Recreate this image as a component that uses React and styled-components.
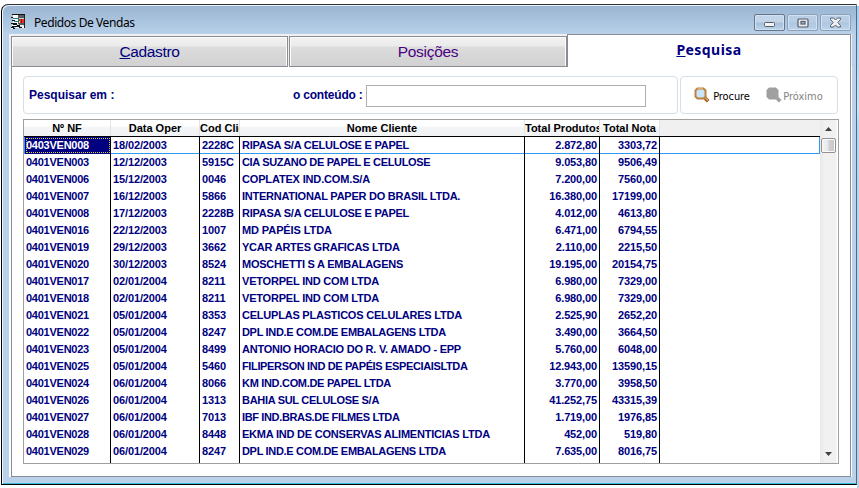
import React from 'react';
import styled, { createGlobalStyle } from 'styled-components';

const Global = createGlobalStyle`
  * { box-sizing: border-box; }
  body { margin: 0; background: #fff; overflow: hidden; }
`;

const Desktop = styled.div`
  width: 859px;
  height: 488px;
  padding: 4px 0 0 1px;
  display: flex;
  background: #fff;
  font-family: 'Liberation Sans', Arial, sans-serif;
  color: #000080;
`;

const Window = styled.main`
  width: 856px;
  height: 481px;
  display: flex;
  flex-direction: column;
  border: 1px solid #000;
  border-top-color: #303234;
  border-right-color: #58677c;
  border-radius: 7px 0 0 0;
  background: linear-gradient(#99b4d1 0, #b9d1ea 29px, #b9d1ea 100%);
  box-shadow: inset 1px 1px 0 #edf5fc, inset 0 -1px 0 #38bcd8;
`;

const NextWindow = styled.div`
  width: 2px;
  height: 488px;
  margin-top: -4px;
  background: linear-gradient(#fff 0 6px, #9fd0f3 6px, #c5e5fc 110px, #b4d8f6 124px, #b9d1ea);
`;

const TitleBar = styled.header`
  height: 29px;
  flex: none;
  display: flex;
  align-items: flex-start;
  padding: 9px 5px 0 9px;
`;

const Title = styled.h1`
  margin: 0 auto 0 7px;
  font: 12px/18px 'Noto Sans', 'Open Sans', sans-serif;
  letter-spacing: -0.42px;
  color: #000;
`;

const WindowButton = styled.button`
  width: 31px;
  height: 17px;
  margin-left: 2px;
  padding: 0;
  display: flex;
  align-items: center;
  justify-content: center;
  border: 1px solid ${p => (p.$strong ? '#65758c' : '#8ba0b9')};
  border-radius: 2px;
  box-shadow: inset 0 0 0 1px #d2e2f3;
  background: ${p => (p.$strong
    ? 'linear-gradient(#c3d5e9 0 48%, #a7bfd9 52%, #bcd3eb)'
    : 'linear-gradient(#b9cee5 0 48%, #aec6e0 52%, #bcd3eb)')};
`;

const Body = styled.div`
  width: 843px;
  height: 443px;
  margin-left: 7px;
  flex: none;
  display: flex;
  flex-direction: column;
  padding: 0 1px 0 2px;
  background: linear-gradient(#f0f0f0 32px, #fff 32px);
`;

const Tabs = styled.nav`
  height: 33px;
  flex: none;
  display: flex;
  align-items: flex-end;
`;

const Tab = styled.div`
  width: ${p => p.$w}px;
  height: ${p => (p.$active ? 33 : 31)}px;
  margin-right: ${p => p.$gap || 0}px;
  padding-top: ${p => (p.$active ? 3 : 3)}px;
  display: flex;
  justify-content: center;
  font-size: 15.5px;
  letter-spacing: ${p => p.$ls || 0}px;
  line-height: 24px;
  border: 1px solid #898c95;
  color: ${p => p.$color || '#000080'};
  background: linear-gradient(#f2f2f2, #ebebeb 9px, #dcdcdc 10px, #d2d2d2 28px);
  box-shadow: inset 1px 1px 0 #fcfcfc, inset -1px 0 0 #fcfcfc;
  ${p => p.$active && `
    background: #fff;
    box-shadow: none;
    border-bottom: 0;
    font: bold 14px/24px 'Noto Sans', 'Open Sans', sans-serif;
    letter-spacing: .45px;
  `}
`;

const Panel = styled.section`
  width: 840px;
  height: 410px;
  flex: none;
  display: flex;
  flex-direction: column;
  padding: 9px 12px 13px 11px;
  border: solid #898c95;
  border-width: 0 1px 1px;
  background: #fff;
`;

const SearchRow = styled.div`
  height: 38px;
  display: flex;
  gap: 2px;
  margin-bottom: 5px;
`;

const Group = styled.div`
  width: ${p => p.$w}px;
  height: 38px;
  display: flex;
  align-items: center;
  padding-left: ${p => p.$pad}px;
  border: 1px solid #d5dfe5;
  border-radius: 4px;
`;

const Label = styled.label`
  width: ${p => p.$w}px;
  font-size: 12px;
  font-weight: bold;
  line-height: 16px;
  letter-spacing: ${p => p.$ls || 0}px;
  white-space: nowrap;
`;

const SearchInput = styled.input`
  width: 280px;
  height: 22px;
  margin-top: 2px;
  border: 1px solid #abadb3;
  background: #fff;
`;

const Action = styled.button`
  width: ${p => p.$w}px;
  height: 24px;
  display: flex;
  align-items: center;
  gap: ${p => p.$gap}px;
  padding: 0;
  border: 0;
  background: none;
  font: 11px/16px 'DejaVu Sans Condensed', 'DejaVu Sans', sans-serif;
  font-stretch: condensed;
  letter-spacing: ${p => p.$ls}px;
  color: ${p => (p.$muted ? '#838383' : '#000')};
`;

const ActionText = styled.span`
  padding-top: 3px;
`;

const GridFrame = styled.div`
  width: 816px;
  height: 345px;
  flex: none;
  display: flex;
  border: 1px solid #a0a0a0;
`;

const Sheet = styled.div`
  width: 796px;
  height: 343px;
  display: flex;
  flex-direction: column;
`;

const columns = '87px 89px 40px 285px 75px 60px 160px';

const HeadRow = styled.div`
  display: grid;
  grid-template-columns: ${columns};
  width: 796px;
  height: 17px;
  flex: none;
  border-bottom: 1px solid #000;
  background: #f0f0f0;
`;

const HeadCell = styled.div`
  overflow: hidden;
  padding-top: 1px;
  text-align: ${p => (p.$clipped ? 'left' : 'center')};
  white-space: nowrap;
  font-size: 11px;
  font-weight: bold;
  line-height: 15px;
  letter-spacing: ${p => p.$ls || 0}px;
  color: #000;
  border-right: 1px solid #e0e3e7;
  background: linear-gradient(#fff 0 6px, #f4f5f7 7px, #f1f2f4);
`;

const Rows = styled.div`
  height: 326px;
  display: grid;
  grid-template-rows: repeat(19, 17px) 3px;
`;

const Row = styled.div`
  display: grid;
  grid-template-columns: ${columns};
  box-shadow: ${p => (p.$current ? 'inset -1px -1px 0 #3399f5, inset 1px 0 0 #3399f5' : 'none')};
`;

const Cell = styled.div`
  padding: 0 2px;
  ${p => p.$selected && `
    margin: 0 0 1px 1px;
    padding-left: 1px;
    background-color: #000080;
    background-clip: padding-box;
    color: #fff;
    outline: 1px dotted #d8c850;
    outline-offset: -2px;
  `}
  text-align: ${p => (p.$right ? 'right' : 'left')};
  font-size: 11px;
  font-weight: bold;
  line-height: 17px;
  letter-spacing: ${p => p.$ls || 0}px;
  white-space: nowrap;
  border-right: 1px solid #000;
`;

const ScrollBar = styled.div`
  width: 18px;
  height: 343px;
  display: flex;
  flex-direction: column;
  align-items: center;
  padding: 1px 2px 1px 0;
  background: linear-gradient(90deg, #e9e9e9, #f1f1f1 5px, #f0f0f0 16px, #fff 17px);
`;

const Arrow = styled.div`
  height: 16px;
  display: flex;
  align-items: center;
`;

const Thumb = styled.div`
  width: 15px;
  height: 15px;
  margin-top: 1px;
  margin-bottom: auto;
  border: 1px solid #929292;
  border-radius: 2px;
  box-shadow: inset 0 0 0 1px #fafafa;
  background: linear-gradient(90deg, #f4f4f4, #e7e7e9 48%, #d0d0d3 52%, #c8c8ca);
`;

const AppIcon = () => (
  <svg width="16" height="16" viewBox="0 0 16 16" shapeRendering="crispEdges">
    <path fill="#c9d3dc" d="M2 1h12v14H9v-2H2z" />
    <path fill="#f8f8f8" d="M2 1h5v9H2zM1 11h4v2H1zM5 13h4v1H5zM0 14h2v1H0zM11 13h2v1h-2z" />
    <path fill="#24788e" d="M2 4h5v1H2zM3 7h4v1H3z" />
    <path fill="#111" d="M1 0h13v1H1zM0 3h2v1H0zM1 6h3v1H1zM0 9h6v1H0zM2 10h4v1H2zM1 12h5v1H1zM0 13h3v1H0zM6 11h3v2H6zM8 13h3v1H8zM2 14h2v1H2z" />
    <path fill="#555d59" d="M7 1h6v3H7zM7 4h1v6H7zM8 9h5v2H8z" />
    <path fill="#222" d="M13 1h1v13h-1z" />
    <path fill="#ee2a22" d="M9 5h1v4H9zM11 5h2v4h-2z" />
    <path fill="#8b1b19" d="M10 5h1v4h-1z" />
    <path fill="#347c42" d="M8 5h1v2H8z" />
    <path fill="#fff" d="M9 11h3v1H9zM11 12h2v2h-2z" />
  </svg>
);

const Minimize = () => (
  <svg width="13" height="9" viewBox="0 0 13 9"><rect x="1.5" y="4.5" width="10" height="4" rx="1" fill="#f3f5f7" stroke="#555c6a" /></svg>
);
const Restore = () => (
  <svg width="12" height="10" viewBox="0 0 12 10"><rect x="1" y="1" width="10" height="8" rx="1" fill="#e7ebef" stroke="#555c6a" strokeWidth="1.2" /><rect x="4" y="3.500" width="4" height="2.500" fill="#a9bed5" stroke="#555c6a" strokeWidth="1.200" /></svg>
);
const Close = () => (
  <svg width="13" height="11" viewBox="0 0 13 11"><path d="M1.500 1h3l2 2 2-2h3v1.500L8.800 5.500l2.700 3V10h-3l-2-2-2 2h-3V8.500l2.700-3-2.700-3z" fill="#edf0f3" stroke="#596271" /></svg>
);

const Magnifier = ({ muted }) => (
  <svg width="16" height="17" viewBox="0 0 16 17">
    <path d="m10.500 10.500 3.700 3.700" stroke={muted ? '#a0a0a0' : '#9a5820'} strokeWidth="3.600" />
    {!muted && <path d="m11 10.500 3 3" stroke="#e6aa62" strokeWidth="1.400" />}
    <path d="M3.500 1.500h6l2 2v6l-2 2h-6l-2-2v-6z" fill={muted ? '#a0a0a0' : '#c9e4fb'} stroke={muted ? '#a0a0a0' : '#bd8240'} strokeWidth="2" />
    {!muted && <path d="M3 2.500 4 1.500h5" fill="none" stroke="#dcac68" />}
  </svg>
);

const Chevron = ({ down }) => (
  <svg width="9" height="6" viewBox="0 0 9 6"><path d={down ? 'M1 1h7L4.500 5z' : 'M1 5h7L4.500 1z'} fill="#404040" /></svg>
);

const orders = [
  ['0403VEN008', '18/02/2003', '2228C', 'RIPASA S/A CELULOSE E PAPEL', '2.872,80', '3303,72'],
  ['0401VEN003', '12/12/2003', '5915C', 'CIA SUZANO DE PAPEL E CELULOSE', '9.053,80', '9506,49'],
  ['0401VEN006', '15/12/2003', '0046', 'COPLATEX IND.COM.S/A', '7.200,00', '7560,00'],
  ['0401VEN007', '16/12/2003', '5866', 'INTERNATIONAL PAPER DO BRASIL LTDA.', '16.380,00', '17199,00'],
  ['0401VEN008', '17/12/2003', '2228B', 'RIPASA S/A CELULOSE E PAPEL', '4.012,00', '4613,80'],
  ['0401VEN016', '22/12/2003', '1007', 'MD PAPÉIS LTDA', '6.471,00', '6794,55'],
  ['0401VEN019', '29/12/2003', '3662', 'YCAR ARTES GRAFICAS LTDA', '2.110,00', '2215,50'],
  ['0401VEN020', '30/12/2003', '8524', 'MOSCHETTI S A EMBALAGENS', '19.195,00', '20154,75'],
  ['0401VEN017', '02/01/2004', '8211', 'VETORPEL IND COM LTDA', '6.980,00', '7329,00'],
  ['0401VEN018', '02/01/2004', '8211', 'VETORPEL IND COM LTDA', '6.980,00', '7329,00'],
  ['0401VEN021', '05/01/2004', '8353', 'CELUPLAS PLASTICOS CELULARES LTDA', '2.525,90', '2652,20'],
  ['0401VEN022', '05/01/2004', '8247', 'DPL IND.E COM.DE EMBALAGENS LTDA', '3.490,00', '3664,50'],
  ['0401VEN023', '05/01/2004', '8499', 'ANTONIO HORACIO DO R. V. AMADO - EPP', '5.760,00', '6048,00'],
  ['0401VEN025', '05/01/2004', '5460', 'FILIPERSON IND DE PAPÉIS ESPECIAISLTDA', '12.943,00', '13590,15'],
  ['0401VEN024', '06/01/2004', '8066', 'KM IND.COM.DE PAPEL LTDA', '3.770,00', '3958,50'],
  ['0401VEN026', '06/01/2004', '1313', 'BAHIA SUL CELULOSE S/A', '41.252,75', '43315,39'],
  ['0401VEN027', '06/01/2004', '7013', 'IBF IND.BRAS.DE FILMES LTDA', '1.719,00', '1976,85'],
  ['0401VEN028', '06/01/2004', '8448', 'EKMA IND DE CONSERVAS ALIMENTICIAS LTDA', '452,00', '519,80'],
  ['0401VEN029', '06/01/2004', '8247', 'DPL IND.E COM.DE EMBALAGENS LTDA', '7.635,00', '8016,75'],
];

const spacing = [-0.25, -0.12, -0.12, -0.1, -0.13, -0.1];

// Tracking of the client names, one value per order.
const nameSpacing = [
  -0.24, -0.34, -0.16, -0.25, -0.24, -0.1, -0.23, -0.23, -0.2, -0.2,
  -0.22, -0.32, -0.24, -0.36, -0.31, -0.3, -0.36, -0.22, -0.32,
];

export default function App() {
  return (
    <Desktop>
      <Global />
      <Window>
        <TitleBar>
          <AppIcon />
          <Title>Pedidos De Vendas</Title>
          <WindowButton $strong><Minimize /></WindowButton>
          <WindowButton><Restore /></WindowButton>
          <WindowButton><Close /></WindowButton>
        </TitleBar>
        <Body>
          <Tabs>
            <Tab $w={277} $gap={1} $ls={-0.36}><span><u>C</u>adastro</span></Tab>
            <Tab $w={278} $ls={-0.3} $color="#4b0082">Posições</Tab>
            <Tab $w={284} $active><span><u>P</u>esquisa</span></Tab>
          </Tabs>
          <Panel>
            <SearchRow>
              <Group $w={656} $pad={5}>
                <Label $w={264}>Pesquisar em :</Label>
                <Label $w={73} $ls={-0.2}>o conteúdo :</Label>
                <SearchInput />
              </Group>
              <Group $w={158} $pad={13}>
                <Action $w={72} $gap={3} $ls={-0.1}><Magnifier /><ActionText>Procure</ActionText></Action>
                <Action $w={60} $gap={1} $ls={0} $muted><Magnifier muted /><ActionText>Próximo</ActionText></Action>
              </Group>
            </SearchRow>
            <GridFrame>
              <Sheet>
                <HeadRow>
                  <HeadCell>Nº NF</HeadCell>
                  <HeadCell>Data Oper</HeadCell>
                  <HeadCell $clipped>Cod Clie</HeadCell>
                  <HeadCell>Nome Cliente</HeadCell>
                  <HeadCell $clipped>Total Produtos</HeadCell>
                  <HeadCell>Total Nota</HeadCell>
                </HeadRow>
                <Rows>
                  {orders.map((order, r) => (
                    <Row key={order[0]} $current={r === 0}>
                      {order.map((value, c) => (
                        <Cell
                          key={c}
                          $selected={r === 0 && c === 0}
                          $right={c > 3}
                          $ls={c === 3 ? nameSpacing[r] : spacing[c]}
                        >
                          {value}
                        </Cell>
                      ))}
                    </Row>
                  ))}
                  <Row>{spacing.map((_, c) => <Cell key={c} />)}</Row>
                </Rows>
              </Sheet>
              <ScrollBar>
                <Arrow><Chevron /></Arrow>
                <Thumb />
                <Arrow><Chevron down /></Arrow>
              </ScrollBar>
            </GridFrame>
          </Panel>
        </Body>
      </Window>
      <NextWindow />
    </Desktop>
  );
}
